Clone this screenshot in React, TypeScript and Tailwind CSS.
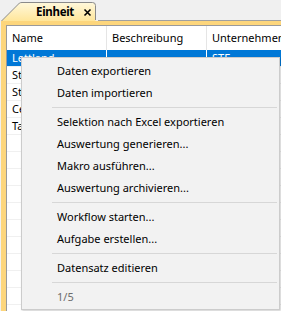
import React from "react";

type Row = { a: string; b: string; c: string; sel?: boolean };

const rows: Row[] = [
  { a: "Lettland", b: "", c: "STE", sel: true },
  { a: "Stück", b: "", c: "" },
  { a: "Stunde", b: "", c: "" },
  { a: "Celsius", b: "", c: "" },
  { a: "Tag", b: "", c: "" },
  { a: "", b: "", c: "" },
  { a: "", b: "", c: "" },
  { a: "", b: "", c: "" },
  { a: "", b: "", c: "" },
  { a: "", b: "", c: "" },
  { a: "", b: "", c: "" },
  { a: "", b: "", c: "" },
  { a: "", b: "", c: "" },
  { a: "", b: "", c: "" },
  { a: "", b: "", c: "" },
];

type MenuEntry = { label?: string; sep?: boolean; disabled?: boolean };

const menu: MenuEntry[] = [
  { label: "Daten exportieren" },
  { label: "Daten importieren" },
  { sep: true },
  { label: "Selektion nach Excel exportieren" },
  { label: "Auswertung generieren..." },
  { label: "Makro ausführen..." },
  { label: "Auswertung archivieren..." },
  { sep: true },
  { label: "Workflow starten..." },
  { label: "Aufgabe erstellen..." },
  { sep: true },
  { label: "Datensatz editieren" },
  { sep: true },
  { label: "1/5", disabled: true },
];

function Tab() {
  return (
    <div className="relative w-[97px] h-[21px] ml-[1px]">
      <svg className="absolute inset-0" width="97" height="21" viewBox="0 0 97 21">
        <defs>
          <linearGradient id="tabg" x1="0" y1="0" x2="0" y2="1">
            <stop offset="0" stopColor="#fff8dc" />
            <stop offset="1" stopColor="#ffe69a" />
          </linearGradient>
        </defs>
        <path
          d="M0.5 21 L18.5 3 Q19.5 2.5 21 2.5 L91.5 2.5 Q94.5 2.5 94.5 5.5 L94.5 21 Z"
          fill="url(#tabg)"
        />
        <path
          d="M0.5 21 L18.5 3 Q19.5 2.5 21 2.5 L91.5 2.5 Q94.5 2.5 94.5 5.5 L94.5 20"
          fill="none"
          stroke="#8a8a8a"
          strokeWidth="1"
        />
        <path d="M83.5 9.5 L89.5 15.5 M89.5 9.5 L83.5 15.5" stroke="#000" strokeWidth="1.6" />
      </svg>
      <div className="relative flex h-full items-center pl-[35px] pt-[3px] text-[11.5px] font-bold text-black leading-none tracking-[-0.3px]">
        Einheit
      </div>
    </div>
  );
}

export default function App() {
  return (
    <div className="relative w-[281px] h-[311px] overflow-hidden bg-[#f0f0f0] font-['Noto_Sans',sans-serif] text-[11px] text-black">
      <div className="flex h-[21px] items-end">
        <Tab />
        <div className="flex-1 border-b border-[#a0a0a0] h-[21px]" />
      </div>
      <div className="ml-[1px] h-[290px] bg-[#fdd67c] pt-[4px] pl-[5px]">
        <div className="h-full bg-white border-l border-t border-[#9a9a9a] overflow-hidden">
          <div className="flex h-[24px] items-center whitespace-nowrap">
            <div className="w-[100px] shrink-0 pl-[5px] border-r border-[#e5e5e5] h-full flex items-center">Name</div>
            <div className="w-[100px] shrink-0 pl-[5px] border-r border-[#e5e5e5] h-full flex items-center">Beschreibung</div>
            <div className="shrink-0 pl-[5px] h-full flex items-center">Unternehmen</div>
          </div>
          {rows.map((r, i) => (
            <div
              key={i}
              className={
                r.sel
                  ? "flex h-[17px] items-center whitespace-nowrap bg-[#0078d7] text-white border-b border-[#f0f0f0]"
                  : "flex h-[17px] items-center whitespace-nowrap border-b border-[#f0f0f0]"
              }
            >
              <div className="w-[100px] shrink-0 pl-[5px] border-r border-white h-full flex items-center overflow-hidden">{r.a}</div>
              <div className="w-[100px] shrink-0 pl-[5px] border-r border-white h-full flex items-center overflow-hidden">{r.b}</div>
              <div className="shrink-0 pl-[5px] h-full flex items-center">{r.c}</div>
            </div>
          ))}
        </div>
      </div>

      <div className="absolute left-[21px] top-[57px] w-[259px] h-[253px] bg-[#f2f2f2] border border-[#cccccc] shadow-[1px_1px_2px_rgba(0,0,0,0.2)] pt-[2px] flex flex-col">
        {menu.map((m, i) =>
          m.sep ? (
            <div key={i} className="h-[7px] flex items-center pl-[30px] pr-[2px]">
              <div className="h-px w-full bg-[#d7d7d7]" />
            </div>
          ) : (
            <div
              key={i}
              className={
                m.disabled
                  ? "h-[22px] flex items-center pl-[35px] text-[#6d6d6d] whitespace-nowrap"
                  : "h-[22px] flex items-center pl-[35px] whitespace-nowrap"
              }
            >
              {m.label}
            </div>
          )
        )}
      </div>
    </div>
  );
}
